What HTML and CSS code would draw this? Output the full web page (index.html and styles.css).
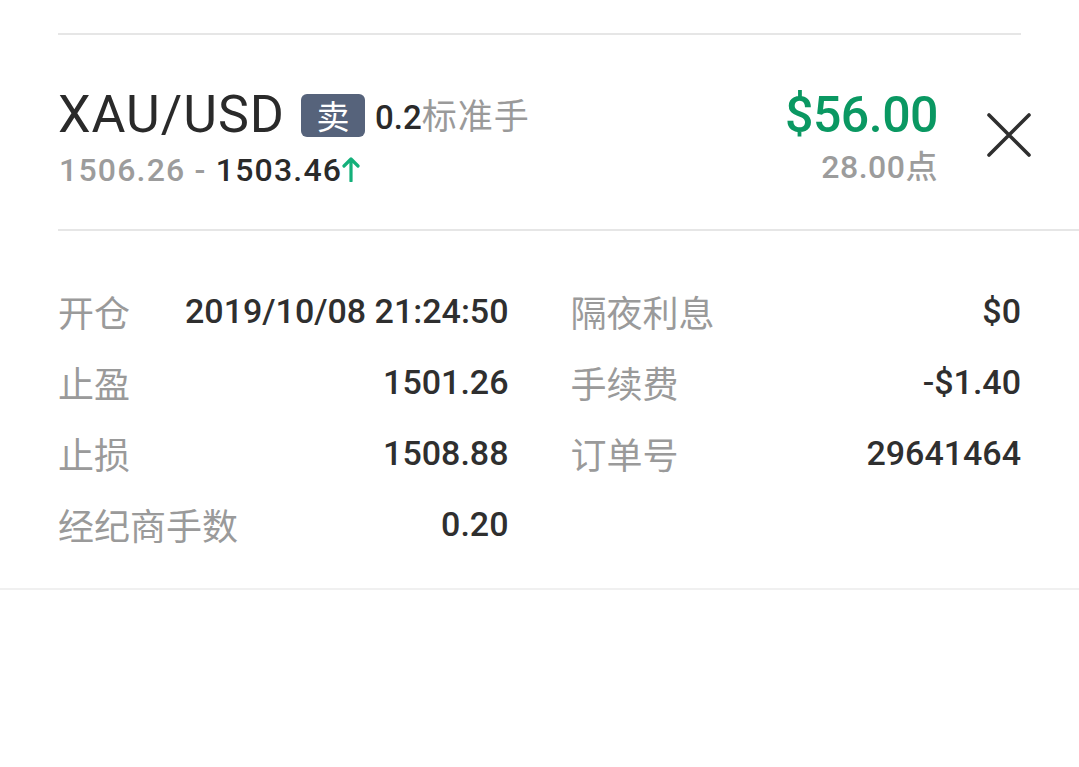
FILE: index.html
```html
<!DOCTYPE html>
<html lang="zh">
<head>
<meta charset="utf-8">
<link rel="stylesheet" href="styles.css">
</head>
<body>
<div class="sheet">
  <div class="rule-top"></div>
  <div class="header">
    <div class="head-left">
      <div class="title-line">
        <span class="symbol">XAU/USD</span>
        <span class="badge">卖</span>
        <span class="lots"><span class="lots-num">0.2</span><span class="lots-unit">标准手</span></span>
      </div>
      <div class="sub-line">
        <span class="open-price">1506.26</span><span class="dash"> - </span><span class="cur-price">1503.46</span><svg class="arrow" width="18" height="26" viewBox="0 0 18 26"><path d="M9 25V4M2 10L9 3l7 7" fill="none" stroke="#14b07a" stroke-width="3.2" stroke-linecap="round" stroke-linejoin="round"/></svg>
      </div>
    </div>
    <div class="head-right">
      <div class="profit">$56.00</div>
      <div class="points">28.00点</div>
    </div>
    <button class="close" aria-label="关闭">
      <svg width="48" height="48" viewBox="0 0 48 48"><path d="M4 4L44 44M44 4L4 44" stroke="#2f2f2f" stroke-width="3.6" stroke-linecap="round" fill="none"/></svg>
    </button>
  </div>
  <div class="rule-mid"></div>
  <div class="details">
    <div class="col">
      <div class="row"><span class="label">开仓</span><span class="value">2019/10/08 21:24:50</span></div>
      <div class="row"><span class="label">止盈</span><span class="value">1501.26</span></div>
      <div class="row"><span class="label">止损</span><span class="value">1508.88</span></div>
      <div class="row"><span class="label">经纪商手数</span><span class="value">0.20</span></div>
    </div>
    <div class="col">
      <div class="row"><span class="label">隔夜利息</span><span class="value">$0</span></div>
      <div class="row"><span class="label">手续费</span><span class="value">-$1.40</span></div>
      <div class="row"><span class="label">订单号</span><span class="value">29641464</span></div>
    </div>
  </div>
  <div class="rule-bottom"></div>
</div>
</body>
</html>
```

FILE: styles.css
```css
html, body {
  margin: 0;
  padding: 0;
  background: #ffffff;
}
body {
  font-family: Roboto, "Noto Sans CJK SC", sans-serif;
  color: #2f2f2f;
}
.sheet {
  padding-top: 33px;
}
.rule-top {
  margin-left: 58px;
  width: 963px;
  height: 2px;
  background: #e6e6e6;
}
.header {
  display: flex;
  align-items: flex-start;
  padding: 52px 0 41px 58px;
}
.head-left {
  flex: 1;
  display: flex;
  flex-direction: column;
  gap: 9px;
}
.title-line {
  display: flex;
  align-items: center;
  height: 56px;
}
.symbol {
  font-size: 52px;
  line-height: 56px;
  font-weight: 400;
  color: #2a2a2a;
  letter-spacing: 1px;
}
.badge {
  margin-left: 16px;
  width: 64px;
  height: 43px;
  border-radius: 6px;
  background: #56637b;
  color: #ffffff;
  font-family: "Noto Sans CJK SC", sans-serif;
  font-size: 33px;
  line-height: 43px;
  text-align: center;
  margin-top: 0;
}
.lots {
  margin-left: 10px;
  font-size: 33px;
  line-height: 42px;
  margin-top: 2px;
}
.lots-num {
  color: #2a2a2a;
  font-weight: 500;
}
.lots-unit {
  font-family: "Noto Sans CJK SC", sans-serif;
  font-size: 35px;
  color: #9a9a9a;
  letter-spacing: 1px;
}
.sub-line {
  display: flex;
  align-items: center;
  height: 36px;
  padding-left: 1px;
  font-size: 32px;
  line-height: 36px;
  font-weight: 500;
  letter-spacing: 1.2px;
}
.open-price, .dash {
  color: #9c9c9c;
}
.dash {
  white-space: pre;
}
.cur-price {
  color: #2a2a2a;
}
.arrow {
  margin-left: 0;
  margin-top: -2px;
}
.head-right {
  display: flex;
  flex-direction: column;
  align-items: flex-end;
  gap: 6px;
}
.profit {
  font-size: 50px;
  line-height: 56px;
  font-weight: 500;
  color: #0a9862;
  letter-spacing: -0.5px;
}
.points {
  font-size: 32px;
  line-height: 36px;
  font-weight: 500;
  color: #9c9c9c;
  letter-spacing: 0.5px;
}
.close {
  margin: 24px 46px 0 47px;
  padding: 0;
  border: 0;
  background: none;
  width: 48px;
  height: 48px;
  display: flex;
}
.rule-mid {
  margin-left: 58px;
  height: 2px;
  background: #e6e6e6;
}
.details {
  display: grid;
  grid-template-columns: 1fr 1fr;
  column-gap: 62px;
  padding: 44px 58px 29px 58px;
}
.row {
  display: flex;
  justify-content: space-between;
  align-items: center;
  height: 71px;
}
.label {
  font-family: "Noto Sans CJK SC", sans-serif;
  font-size: 36px;
  color: #9a9a9a;
}
.value {
  font-size: 34px;
  font-weight: 500;
  color: #2f2f2f;
}
.rule-bottom {
  height: 2px;
  background: #f0f0f0;
}
```
